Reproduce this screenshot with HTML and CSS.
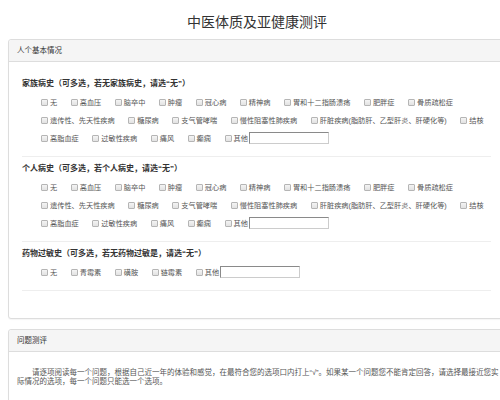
FILE: index.html
```html
<!DOCTYPE html>
<html lang="zh-CN">
<head>
<meta charset="utf-8">
<title>中医体质及亚健康测评</title>
<link rel="stylesheet" href="styles.css">
</head>
<body>
<div class="page">
  <h1 class="title">中医体质及亚健康测评</h1>

  <div class="panel">
    <div class="panel-heading">人个基本情况</div>
    <div class="panel-body form">
      <div class="section">
        <div class="section-title">家族病史（可多选，若无家族病史，请选“无”）</div>
        <div class="row">
          <label class="opt"><input type="checkbox">无</label>
          <label class="opt"><input type="checkbox">高血压</label>
          <label class="opt"><input type="checkbox">脑卒中</label>
          <label class="opt"><input type="checkbox">肿瘤</label>
          <label class="opt"><input type="checkbox">冠心病</label>
          <label class="opt"><input type="checkbox">精神病</label>
          <label class="opt"><input type="checkbox">胃和十二指肠溃疡</label>
          <label class="opt"><input type="checkbox">肥胖症</label>
          <label class="opt"><input type="checkbox">骨质疏松症</label>
        </div>
        <div class="row">
          <label class="opt"><input type="checkbox">遗传性、先天性疾病</label>
          <label class="opt"><input type="checkbox">糖尿病</label>
          <label class="opt"><input type="checkbox">支气管哮喘</label>
          <label class="opt"><input type="checkbox">慢性阻塞性肺疾病</label>
          <label class="opt"><input type="checkbox">肝脏疾病(脂肪肝、乙型肝炎、肝硬化等)</label>
          <label class="opt"><input type="checkbox">结核</label>
        </div>
        <div class="row">
          <label class="opt"><input type="checkbox">高脂血症</label>
          <label class="opt"><input type="checkbox">过敏性疾病</label>
          <label class="opt"><input type="checkbox">痛风</label>
          <label class="opt"><input type="checkbox">癫痫</label>
          <label class="opt other"><input type="checkbox">其他<input type="text" class="txt"></label>
        </div>
      </div>

      <div class="section">
        <div class="section-title">个人病史（可多选，若个人病史，请选“无”）</div>
        <div class="row">
          <label class="opt"><input type="checkbox">无</label>
          <label class="opt"><input type="checkbox">高血压</label>
          <label class="opt"><input type="checkbox">脑卒中</label>
          <label class="opt"><input type="checkbox">肿瘤</label>
          <label class="opt"><input type="checkbox">冠心病</label>
          <label class="opt"><input type="checkbox">精神病</label>
          <label class="opt"><input type="checkbox">胃和十二指肠溃疡</label>
          <label class="opt"><input type="checkbox">肥胖症</label>
          <label class="opt"><input type="checkbox">骨质疏松症</label>
        </div>
        <div class="row">
          <label class="opt"><input type="checkbox">遗传性、先天性疾病</label>
          <label class="opt"><input type="checkbox">糖尿病</label>
          <label class="opt"><input type="checkbox">支气管哮喘</label>
          <label class="opt"><input type="checkbox">慢性阻塞性肺疾病</label>
          <label class="opt"><input type="checkbox">肝脏疾病(脂肪肝、乙型肝炎、肝硬化等)</label>
          <label class="opt"><input type="checkbox">结核</label>
        </div>
        <div class="row">
          <label class="opt"><input type="checkbox">高脂血症</label>
          <label class="opt"><input type="checkbox">过敏性疾病</label>
          <label class="opt"><input type="checkbox">痛风</label>
          <label class="opt"><input type="checkbox">癫痫</label>
          <label class="opt other"><input type="checkbox">其他<input type="text" class="txt"></label>
        </div>
      </div>

      <div class="section">
        <div class="section-title">药物过敏史（可多选，若无药物过敏是，请选“无”）</div>
        <div class="row">
          <label class="opt"><input type="checkbox">无</label>
          <label class="opt"><input type="checkbox">青霉素</label>
          <label class="opt"><input type="checkbox">磺胺</label>
          <label class="opt"><input type="checkbox">链霉素</label>
          <label class="opt other"><input type="checkbox">其他<input type="text" class="txt"></label>
        </div>
      </div>
    </div>
  </div>

  <div class="panel">
    <div class="panel-heading">问题测评</div>
    <div class="panel-body intro">
      <p class="note">请逐项阅读每一个问题，根据自己近一年的体验和感觉，在最符合您的选项口内打上“√”。如果某一个问题您不能肯定回答，请选择最接近您实际情况的选项，每一个问题只能选一个选项。</p>
    </div>
  </div>
</div>
</body>
</html>
```

FILE: styles.css
```css
html {
  overflow: hidden;
}

body {
  margin: 0;
  background: #ffffff;
  color: #333333;
  font-family: "Liberation Sans", "Noto Sans CJK SC", sans-serif;
}

.page {
  width: 514px;
}

.title {
  margin: 0 0 8px;
  padding-top: 11px;
  font-family: "Noto Sans CJK SC", sans-serif;
  font-size: 14px;
  line-height: 20px;
  font-weight: normal;
  text-align: center;
  color: #333333;
}

.panel {
  margin: 0 8px 10px;
  border: 1px solid #dddddd;
  border-radius: 3px;
  background: #ffffff;
  box-shadow: 0 1px 1px rgba(0, 0, 0, 0.04);
}

.panel-heading {
  height: 21px;
  line-height: 21px;
  padding: 0 8px;
  background: #f5f5f5;
  border-bottom: 1px solid #dddddd;
  border-radius: 3px 3px 0 0;
  font-size: 7.5px;
  color: #333333;
}

.form {
  padding: 10px 14px 27px 13px;
}

.section {
  padding: 6px 0 9px;
  border-bottom: 1px solid #eeeeee;
}

.section-title {
  font-size: 8px;
  line-height: 12px;
  font-weight: bold;
  color: #333333;
  margin-bottom: 3px;
  white-space: nowrap;
}

.row {
  display: flex;
  align-items: center;
  height: 18px;
  padding-left: 19px;
  white-space: nowrap;
}

.opt {
  display: flex;
  align-items: center;
  margin-right: 13.5px;
  font-size: 7.2px;
  color: #555555;
}

.opt input[type="checkbox"] {
  -webkit-appearance: none;
  appearance: none;
  width: 7px;
  height: 7px;
  margin: 0 2px 0 0;
  border: 1px solid #b5b5b5;
  border-radius: 1px;
  background: linear-gradient(#f4f4f4, #e2e2e2);
  box-sizing: border-box;
}

.txt {
  width: 80px;
  height: 12px;
  margin: 0 0 0 1px;
  padding: 0;
  box-sizing: border-box;
  border: 1px solid #cccccc;
  border-top-color: #8a8a8a;
  border-left-color: #8a8a8a;
  background: #ffffff;
}

.intro {
  padding: 16px 2px 20px 8px;
}

.note {
  margin: 0;
  font-size: 7.5px;
  line-height: 9px;
  text-indent: 15px;
  color: #555555;
}
```
